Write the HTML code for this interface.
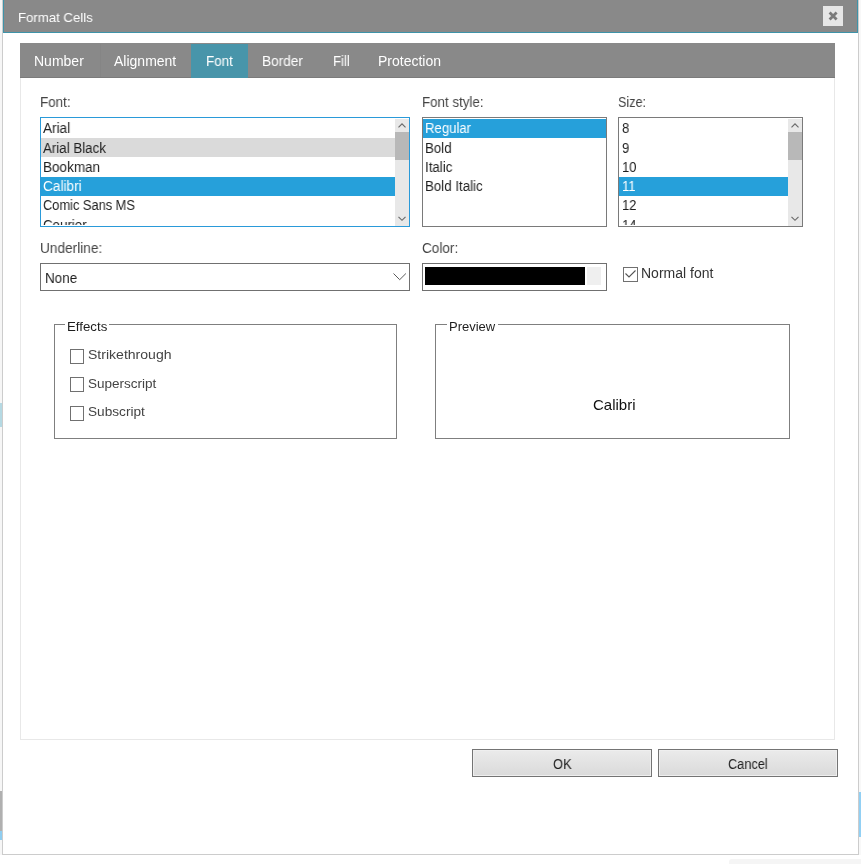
<!DOCTYPE html>
<html><head><meta charset="utf-8">
<style>
html,body{margin:0;padding:0;width:861px;height:864px;overflow:hidden;background:#ffffff;}
*{box-sizing:border-box;}
.a{position:absolute;}
.t{position:absolute;transform-origin:0 0;-webkit-font-smoothing:antialiased;will-change:transform;font-family:"Liberation Sans",sans-serif;font-size:14px;line-height:14px;white-space:nowrap;color:#1e1e1e;}
.lbl{color:#444444;}
.w{color:#ffffff;}
.row{position:absolute;height:19px;}
.sb{position:absolute;background:#e8e8e8;}
.thumb{position:absolute;background:#b8b8b8;}
.cb{position:absolute;width:14px;height:15px;border:1px solid #707070;background:#fff;}
.btn{position:absolute;height:28px;border:1px solid #747474;background:linear-gradient(#ebebeb,#dadada);box-shadow:inset 0 0 0 1px #efefef;}
</style></head><body>
<!-- outside background strips -->
<div class="a" style="left:0;top:0;width:2px;height:864px;background:#f6f6f6"></div>
<div class="a" style="left:0;top:403px;width:2px;height:24px;background:#b5d9e3"></div>
<div class="a" style="left:0;top:791px;width:2px;height:40px;background:#b0b0b0"></div>
<div class="a" style="left:0;top:831px;width:2px;height:9px;background:#8fcdf0"></div>
<div class="a" style="left:859px;top:0;width:2px;height:864px;background:#f8f8f8"></div>
<div class="a" style="left:859px;top:792px;width:2px;height:45px;background:#92d0f4"></div>
<div class="a" style="left:0;top:855px;width:861px;height:9px;background:#ffffff"></div>
<div class="a" style="left:729px;top:859px;width:132px;height:5px;background:#f5f5f5;border-top-left-radius:3px"></div>

<!-- dialog border -->
<div class="a" style="left:2px;top:0;width:857px;height:855px;border:1px solid #cccccc;border-top:none;background:#fff"></div>
<!-- title bar -->
<div class="a" style="left:3px;top:0;width:855px;height:33px;background:#898989;border:1px solid #3e93a9;border-top:none"></div>
<div class="t w" style="left:18px;top:10.5px;color:#ffffff;font-size:13.6px;transform:scaleX(0.97)">Format Cells</div>
<!-- close button -->
<div class="a" style="left:823px;top:6px;width:20px;height:20px;background:#e6e6e6"></div>
<svg class="a" style="left:823px;top:6px" width="20" height="20" viewBox="0 0 20 20"><path d="M6.6 6.4 L13.6 13.4 M13.6 6.4 L6.6 13.4" stroke="#7b7b7b" stroke-width="2.8" fill="none"/></svg>

<!-- content panel -->
<div class="a" style="left:20px;top:43px;width:815px;height:697px;border:1px solid #e8e8e8"></div>
<!-- tab bar -->
<div class="a" style="left:20px;top:43px;width:815px;height:35px;background:#898989;border-bottom:1px solid #7b7b7b"></div>
<div class="a" style="left:100px;top:44px;width:1px;height:33px;background:#858585"></div>
<div class="a" style="left:191px;top:44px;width:57px;height:34px;background:#4895aa"></div>
<div class="t w" style="left:34px;top:54px">Number</div>
<div class="t w" style="left:114px;top:54px">Alignment</div>
<div class="t w" style="left:206px;top:54px;transform:scaleX(0.963)">Font</div>
<div class="t w" style="left:262px;top:54px;transform:scaleX(0.976)">Border</div>
<div class="t w" style="left:333px;top:54px;transform:scaleX(0.94)">Fill</div>
<div class="t w" style="left:378px;top:54px">Protection</div>

<!-- labels -->
<div class="t lbl" style="left:40px;top:95px;transform:scaleX(0.96)">Font:</div>
<div class="t lbl" style="left:422px;top:95px;transform:scaleX(0.952)">Font style:</div>
<div class="t lbl" style="left:618px;top:95px;transform:scaleX(0.9)">Size:</div>

<!-- font list -->
<div class="a" style="left:40px;top:117px;width:370px;height:110px;border:1px solid #2a9ad9;overflow:hidden">
  <div class="row" style="left:0;top:20px;width:354px;background:#dadada"></div>
  <div class="row" style="left:0;top:59px;width:354px;background:#26a0da"></div>
  <div class="t" style="left:2.4px;top:3px;transform:scaleX(0.97)">Arial</div>
  <div class="t" style="left:2.4px;top:23px;transform:scaleX(0.95)">Arial Black</div>
  <div class="t" style="left:2.4px;top:42px;transform:scaleX(0.966)">Bookman</div>
  <div class="t w" style="left:2.4px;top:61px;transform:scaleX(0.975)">Calibri</div>
  <div class="t" style="left:2.4px;top:80px;transform:scaleX(0.916)">Comic Sans MS</div>
  <div class="t" style="left:2.4px;top:100px;transform:scaleX(0.95)">Courier</div>
  <div class="a" style="left:0;top:107px;width:368px;height:10px;background:#fff"></div>
  <div class="sb" style="left:354px;top:1px;width:14px;height:107px"></div>
  <div class="thumb" style="left:354px;top:14px;width:14px;height:28px"></div>
  <svg class="a" style="left:354px;top:1px" width="14" height="107"><path d="M3.5 8.3 L7 4.8 L10.5 8.3" stroke="#6a6a6a" stroke-width="1.15" fill="none"/><path d="M3.5 97.8 L7 101.3 L10.5 97.8" stroke="#6a6a6a" stroke-width="1.15" fill="none"/></svg>
</div>

<!-- style list -->
<div class="a" style="left:422px;top:117px;width:185px;height:110px;border:1px solid #7a7a7a;overflow:hidden">
  <div class="row" style="left:0;top:1px;width:183px;background:#26a0da"></div>
  <div class="t w" style="left:2px;top:3px;transform:scaleX(0.94)">Regular</div>
  <div class="t" style="left:2px;top:23px;transform:scaleX(0.95)">Bold</div>
  <div class="t" style="left:2px;top:42px;transform:scaleX(0.95)">Italic</div>
  <div class="t" style="left:2px;top:61px;transform:scaleX(0.95)">Bold Italic</div>
</div>

<!-- size list -->
<div class="a" style="left:618px;top:117px;width:185px;height:110px;border:1px solid #7a7a7a;overflow:hidden">
  <div class="row" style="left:0;top:59px;width:169px;background:#26a0da"></div>
  <div class="t" style="left:3px;top:3px;transform:scaleX(0.93)">8</div>
  <div class="t" style="left:3px;top:23px;transform:scaleX(0.93)">9</div>
  <div class="t" style="left:3px;top:42px;transform:scaleX(0.93)">10</div>
  <div class="t w" style="left:3px;top:61px;transform:scaleX(0.93)">11</div>
  <div class="t" style="left:3px;top:80px;transform:scaleX(0.93)">12</div>
  <div class="t" style="left:3px;top:100px;transform:scaleX(0.93)">14</div>
  <div class="a" style="left:0;top:107px;width:183px;height:10px;background:#fff"></div>
  <div class="sb" style="left:169px;top:1px;width:14px;height:107px"></div>
  <div class="thumb" style="left:169px;top:14px;width:14px;height:28px"></div>
  <svg class="a" style="left:169px;top:1px" width="14" height="107"><path d="M3.5 8.3 L7 4.8 L10.5 8.3" stroke="#6a6a6a" stroke-width="1.15" fill="none"/><path d="M3.5 97.8 L7 101.3 L10.5 97.8" stroke="#6a6a6a" stroke-width="1.15" fill="none"/></svg>
</div>

<!-- underline / color labels -->
<div class="t lbl" style="left:40px;top:241px;transform:scaleX(0.974)">Underline:</div>
<div class="t lbl" style="left:422px;top:241px;transform:scaleX(0.97)">Color:</div>

<!-- underline combo -->
<div class="a" style="left:40px;top:263px;width:370px;height:28px;border:1px solid #707070;background:#fff"></div>
<div class="t" style="left:45px;top:271px;transform:scaleX(0.96)">None</div>
<svg class="a" style="left:390px;top:270px" width="18" height="12"><path d="M3.5 3.5 L9.7 9.7 L15.9 3.5" stroke="#5a5a5a" stroke-width="1" fill="none"/></svg>

<!-- color box -->
<div class="a" style="left:422px;top:263px;width:185px;height:28px;border:1px solid #707070;background:#fff"></div>
<div class="a" style="left:425px;top:267px;width:160px;height:18px;background:#000"></div>
<div class="a" style="left:587px;top:267px;width:14px;height:18px;background:#efefef"></div>

<!-- normal font checkbox -->
<div class="cb" style="left:623px;top:267px;width:15px;height:15px"></div>
<svg class="a" style="left:623px;top:267px" width="15" height="15"><path d="M2.5 6.5 L6 10 L12.5 3.5" stroke="#555" stroke-width="1.1" fill="none"/></svg>
<div class="t" style="left:641px;top:266px;color:#333">Normal font</div>

<!-- effects group -->
<div class="a" style="left:54px;top:324px;width:343px;height:115px;border:1px solid #7f7f7f"></div>
<div class="a" style="left:65px;top:318px;width:44px;height:12px;background:#fff"></div>
<div class="t" style="left:67px;top:320px;font-size:13px;line-height:13px;transform:scaleX(1.02)">Effects</div>
<div class="cb" style="left:70px;top:349px"></div>
<div class="t lbl" style="left:88px;top:348px;font-size:13px;line-height:13px;transform:scaleX(1.08)">Strikethrough</div>
<div class="cb" style="left:70px;top:377px"></div>
<div class="t lbl" style="left:88px;top:377px;font-size:13px;line-height:13px;transform:scaleX(1.04)">Superscript</div>
<div class="cb" style="left:70px;top:406px"></div>
<div class="t lbl" style="left:88px;top:405px;font-size:13px;line-height:13px;transform:scaleX(1.05)">Subscript</div>

<!-- preview group -->
<div class="a" style="left:435px;top:324px;width:355px;height:115px;border:1px solid #7f7f7f"></div>
<div class="a" style="left:447px;top:318px;width:51px;height:12px;background:#fff"></div>
<div class="t" style="left:449px;top:320px;font-size:13px;line-height:13px;transform:scaleX(1.0)">Preview</div>
<div class="t" style="left:593px;top:397px;font-size:15px;line-height:15px;color:#111">Calibri</div>

<!-- buttons -->
<div class="btn" style="left:472px;top:749px;width:180px"></div>
<div class="t" style="left:553px;top:757px;transform:scaleX(0.92)">OK</div>
<div class="btn" style="left:658px;top:749px;width:180px"></div>
<div class="t" style="left:728px;top:757px;transform:scaleX(0.91)">Cancel</div>
</body></html>
